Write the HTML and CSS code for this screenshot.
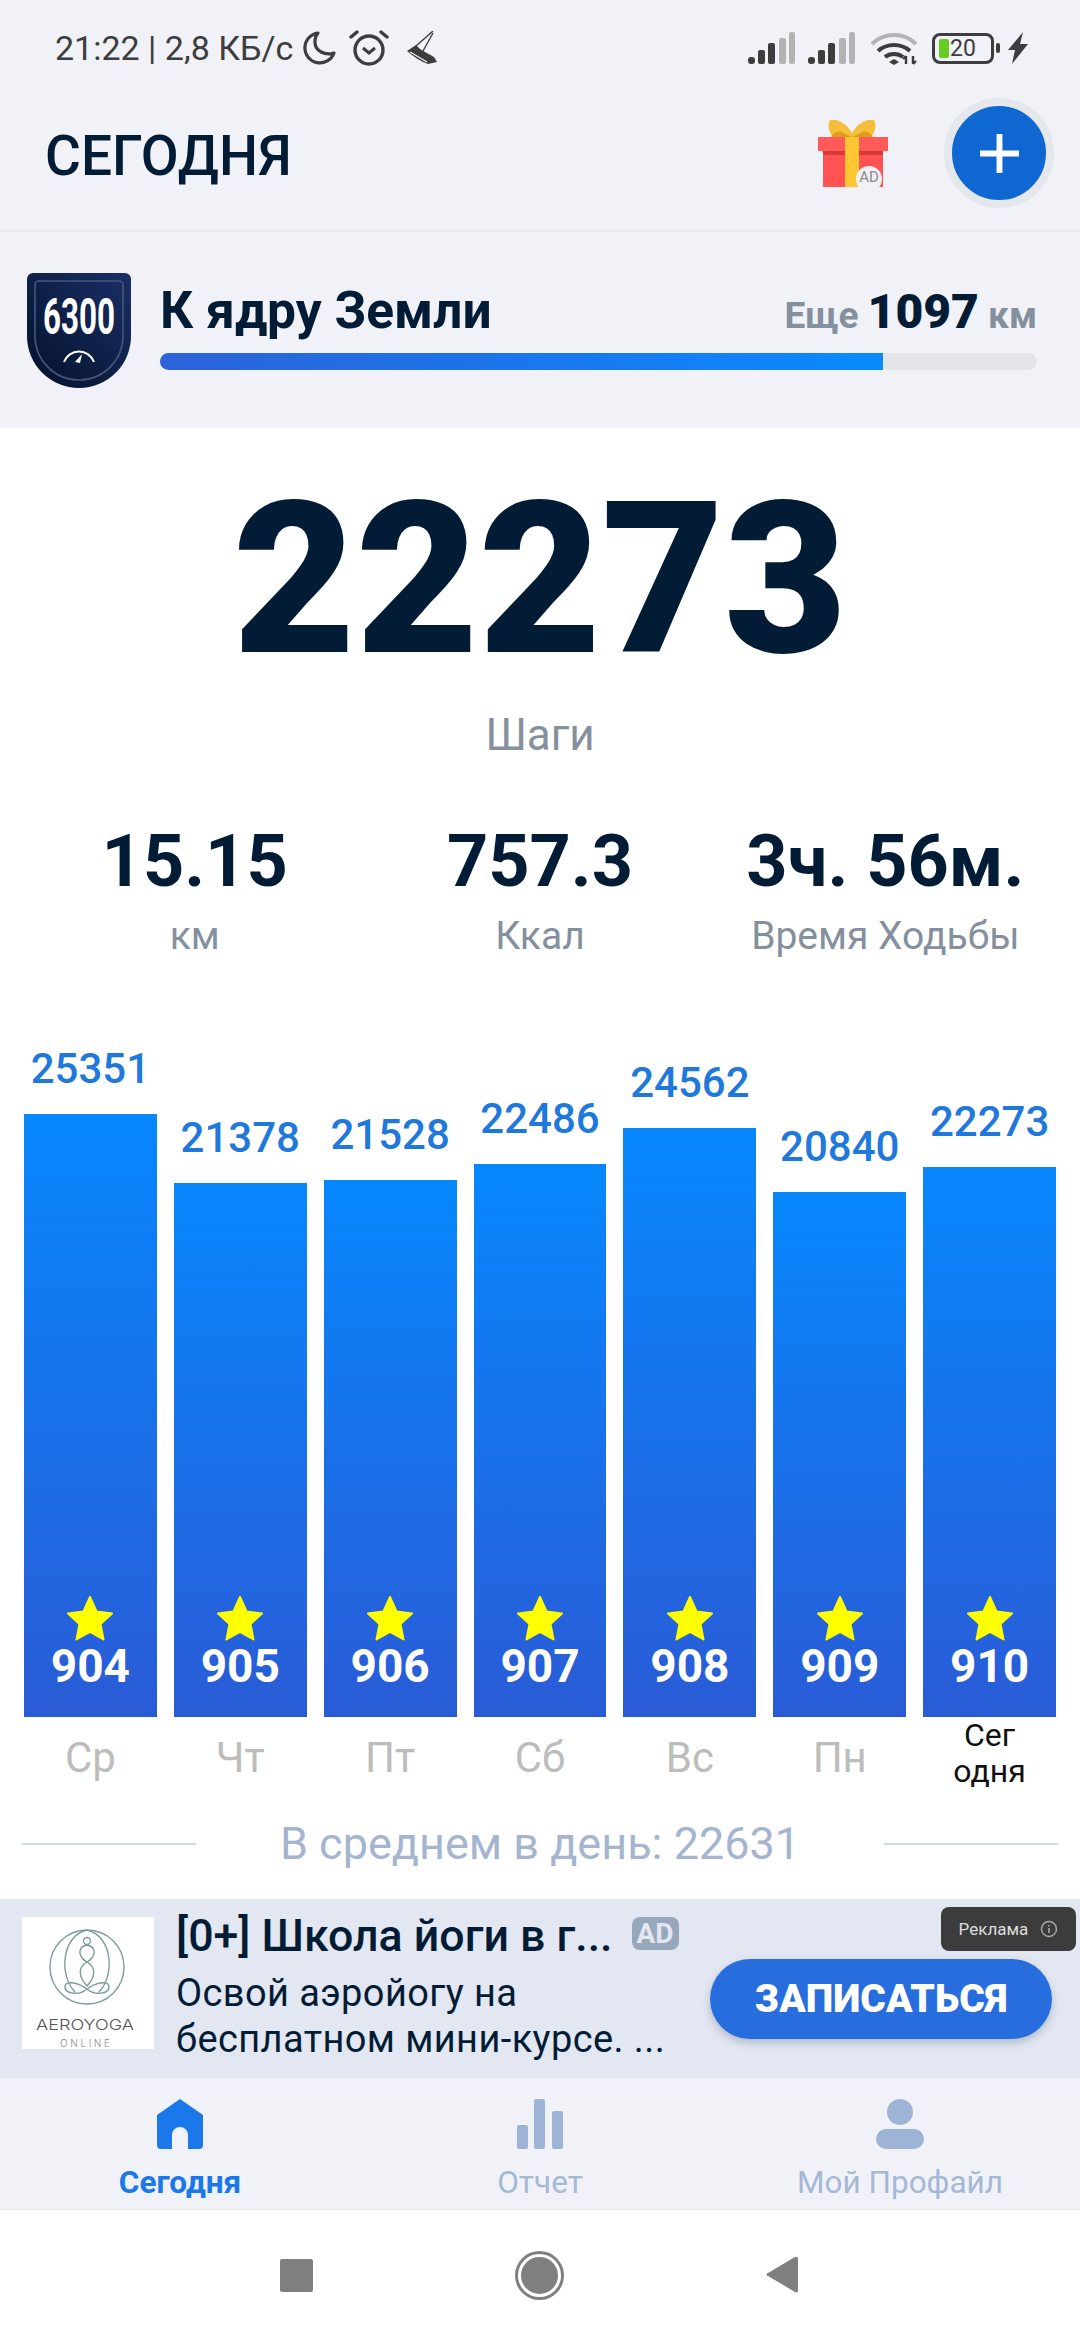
FILE: index.html
```html
<!DOCTYPE html>
<html lang="ru">

<head>
  <meta charset="UTF-8">
  <meta name="viewport" content="width=device-width, initial-scale=1.0">
  <title>Шаги</title>
  <link rel="stylesheet" href="styles.css">
</head>
<body>
  <div class="phone">

    <div class="status">
      <div class="status-left">
        <span class="status-text">21:22 | 2,8 КБ/с</span>
        <svg class="ico-moon" viewBox="0 0 36 36"><path d="M17 3a15 15 0 1 0 16 20c-9 3-19-2-19-11 0-4 1-7 3-9z" fill="none" stroke="#3d3d3d" stroke-width="3.2" stroke-linejoin="round"/></svg>
        <svg class="ico-alarm" viewBox="0 0 40 38"><circle cx="20" cy="21" r="14" fill="none" stroke="#3d3d3d" stroke-width="3.4"/><path d="M14 19l6 5 6-5" fill="none" stroke="#3d3d3d" stroke-width="3"/><path d="M2 8l6-5M38 8l-6-5" stroke="#3d3d3d" stroke-width="3.4" stroke-linecap="round"/></svg>
        <svg class="ico-shoe" viewBox="0 0 32 34"><path d="M0 20L9 14l4 4 5 3 9 5 3 5-9 2Q10 29 0 20z" fill="#3d3d3d"/><path d="M9 15L26 0M16 20L26 2" stroke="#3d3d3d" stroke-width="1.4" fill="none"/><path d="M3 21l17 10" stroke="#f0f2f7" stroke-width="1.2"/></svg>
      </div>
      <div class="status-right">
        <svg class="ico-signal" viewBox="0 0 48 32"><rect x="0" y="25" width="7" height="7" rx="3" fill="#3d3d3d"/><rect x="10" y="18" width="7" height="14" rx="2" fill="#3d3d3d"/><rect x="20" y="11" width="7" height="21" rx="2" fill="#3d3d3d"/><rect x="31" y="6" width="7" height="26" rx="2" fill="#b3b3b3"/><rect x="41" y="0" width="6" height="32" rx="2" fill="#b3b3b3"/></svg>
        <svg class="ico-signal" viewBox="0 0 48 32"><rect x="0" y="25" width="7" height="7" rx="3" fill="#3d3d3d"/><rect x="10" y="18" width="7" height="14" rx="2" fill="#3d3d3d"/><rect x="20" y="11" width="7" height="21" rx="2" fill="#3d3d3d"/><rect x="31" y="6" width="7" height="26" rx="2" fill="#b3b3b3"/><rect x="41" y="0" width="6" height="32" rx="2" fill="#b3b3b3"/></svg>
        <svg class="ico-wifi" viewBox="0 0 48 34"><path d="M2 13C14 1 34 1 46 13" fill="none" stroke="#b3b3b3" stroke-width="4"/><path d="M8 20c9-8 23-8 32 0" fill="none" stroke="#3d3d3d" stroke-width="4"/><path d="M15 26c5-4 13-4 18 0" fill="none" stroke="#3d3d3d" stroke-width="4"/><path d="M19 31l5-3 5 3-5 3z" fill="#3d3d3d"/><path d="M36 33v-8M36 25l-3 3M43 25v8M43 33l3-3" stroke="#3d3d3d" stroke-width="2.4" fill="none"/></svg>
        <div class="battery">
          <div class="battery-body"><span class="battery-fill"></span><span class="battery-num">20</span></div>
          <span class="battery-cap"></span>
        </div>
        <svg class="ico-bolt" viewBox="0 0 20 32"><path d="M15 0L0 18h7l-3 14L20 12h-8z" fill="#3d3d3d"/></svg>
      </div>
    </div>

    <div class="header">
      <h1 class="page-title">СЕГОДНЯ</h1>
      <svg class="gift" viewBox="0 0 70 68">
        <path d="M34 14C28 4 20 0 12 1c-3 6-1 12 3 17h38c4-5 6-11 3-17-8-1-16 3-22 13z" fill="#f5bf3a"/>
        <path d="M13 18c2-4 6-6 11-5l10 5zM55 18c-2-4-6-6-11-5l-10 5z" fill="#e09c1e"/>
        <rect x="0" y="18" width="70" height="14" fill="#ff5a5a"/>
        <rect x="5" y="32" width="60" height="36" fill="#ff5252"/>
        <rect x="5" y="32" width="60" height="4" fill="#d93838"/>
        <rect x="27" y="18" width="14" height="50" fill="#fdc632"/>
        <circle cx="51" cy="60" r="13" fill="#f0f2f7"/>
        <text x="51" y="63" class="gift-ad" text-anchor="middle">AD</text>
      </svg>
      <div class="add-btn"><svg viewBox="0 0 40 40" class="add-plus"><path d="M20 0v40M0 20h40" stroke="#fff" stroke-width="6"/></svg></div>
    </div>

    <div class="goal">
      <svg class="badge" viewBox="0 0 104 115">
        <defs>
          <linearGradient id="shield" x1="1" y1="0" x2="0" y2="1">
            <stop offset="0" stop-color="#1a2f66"/>
            <stop offset="1" stop-color="#04112a"/>
          </linearGradient>
        </defs>
        <path d="M6 0H98a6 6 0 0 1 6 6V63a52 52 0 0 1-104 0V6a6 6 0 0 1 6-6z" fill="url(#shield)"/>
        <path d="M12 8H92a4 4 0 0 1 4 4V63a44 44 0 0 1-88 0V12a4 4 0 0 1 4-4z" fill="none" stroke="#47557a" stroke-width="1.6"/>
        <text x="52" y="61" class="badge-num" text-anchor="middle" textLength="72" lengthAdjust="spacingAndGlyphs">6300</text>
        <path d="M37 89a16 16 0 0 1 30 0" fill="none" stroke="#fff" stroke-width="2"/>
        <path d="M48 89l7-8-2 9z" fill="#fff"/>
      </svg>
      <div class="goal-body">
        <div class="goal-row">
          <span class="goal-name">К ядру Земли</span>
          <span class="goal-left">Еще <b>1097</b> км</span>
        </div>
        <div class="progress"><div class="progress-fill" style="width: 82.4%"></div></div>
      </div>
    </div>

    <div class="main">
      <div class="steps">22273</div>
      <div class="steps-label">Шаги</div>

      <div class="stats">
        <div class="stat"><div class="stat-num">15.15</div><div class="stat-label">км</div></div>
        <div class="stat"><div class="stat-num">757.3</div><div class="stat-label">Ккал</div></div>
        <div class="stat"><div class="stat-num">3ч. 56м.</div><div class="stat-label">Время Ходьбы</div></div>
      </div>

      <div class="chart">
        <div class="col"><div class="col-val">25351</div><div class="bar" style="height: 603px"><svg class="star" viewBox="0 0 50 48"><path d="M25 3l6.500 14.500 15.500 2-11.500 10.500 3 15.500-13.500-7.500-13.500 7.500 3-15.500L3 19.500l15.500-2z"/></svg><div class="bar-num">904</div></div><div class="day">Ср</div></div>
        <div class="col"><div class="col-val">21378</div><div class="bar" style="height: 534px"><svg class="star" viewBox="0 0 50 48"><path d="M25 3l6.500 14.500 15.500 2-11.500 10.500 3 15.500-13.500-7.500-13.500 7.500 3-15.500L3 19.500l15.500-2z"/></svg><div class="bar-num">905</div></div><div class="day">Чт</div></div>
        <div class="col"><div class="col-val">21528</div><div class="bar" style="height: 537px"><svg class="star" viewBox="0 0 50 48"><path d="M25 3l6.500 14.500 15.500 2-11.500 10.500 3 15.500-13.500-7.500-13.500 7.500 3-15.500L3 19.500l15.500-2z"/></svg><div class="bar-num">906</div></div><div class="day">Пт</div></div>
        <div class="col"><div class="col-val">22486</div><div class="bar" style="height: 553px"><svg class="star" viewBox="0 0 50 48"><path d="M25 3l6.500 14.500 15.500 2-11.500 10.500 3 15.500-13.500-7.500-13.500 7.500 3-15.500L3 19.500l15.500-2z"/></svg><div class="bar-num">907</div></div><div class="day">Сб</div></div>
        <div class="col"><div class="col-val">24562</div><div class="bar" style="height: 589px"><svg class="star" viewBox="0 0 50 48"><path d="M25 3l6.500 14.500 15.500 2-11.500 10.500 3 15.500-13.500-7.500-13.500 7.500 3-15.500L3 19.500l15.500-2z"/></svg><div class="bar-num">908</div></div><div class="day">Вс</div></div>
        <div class="col"><div class="col-val">20840</div><div class="bar" style="height: 525px"><svg class="star" viewBox="0 0 50 48"><path d="M25 3l6.500 14.500 15.500 2-11.500 10.500 3 15.500-13.500-7.500-13.500 7.500 3-15.500L3 19.500l15.500-2z"/></svg><div class="bar-num">909</div></div><div class="day">Пн</div></div>
        <div class="col"><div class="col-val">22273</div><div class="bar" style="height: 550px"><svg class="star" viewBox="0 0 50 48"><path d="M25 3l6.500 14.500 15.500 2-11.500 10.500 3 15.500-13.500-7.500-13.500 7.500 3-15.500L3 19.500l15.500-2z"/></svg><div class="bar-num">910</div></div><div class="day today">Сег<br>одня</div></div>
      </div>

      <div class="average">
        <span class="avg-line"></span>
        <span class="avg-text">В среднем в день: 22631</span>
        <span class="avg-line"></span>
      </div>
    </div>

    <div class="ad">
      <svg class="ad-logo" viewBox="0 0 132 132">
        <rect width="132" height="132" fill="#fff"/>
        <g fill="none" stroke="#7f9c9c" stroke-width="1.4">
          <circle cx="65" cy="50" r="37"/>
          <path d="M65 13c-26 6-28 46-12 62M65 13c26 6 28 46 12 62"/>
          <circle cx="65" cy="24" r="3.500"/>
          <path d="M65 28c-10 2-9 12 0 17 9 5 9 14 0 24-9-10-9-19 0-24 9-5 10-15 0-17z"/>
          <path d="M65 72c-8-6-21-9-22-3-1 8 14 10 22 3 8 7 23 5 22-3-1-6-14-3-22 3z"/>
        </g>
        <text x="63" y="113" class="logo-main" text-anchor="middle" textLength="98" lengthAdjust="spacingAndGlyphs">AEROYOGA</text>
        <text x="63" y="130" class="logo-sub" text-anchor="middle" textLength="50">ONLINE</text>
      </svg>
      <div class="ad-text">
        <div class="ad-title"><span>[0+] Школа йоги в г...</span><span class="ad-mark">AD</span></div>
        <div class="ad-desc">Освой аэройогу на<br>бесплатном мини-курсе. ...</div>
      </div>
      <div class="ad-btn">ЗАПИСАТЬСЯ</div>
      <div class="ad-tag">
        <span>Реклама</span>
        <svg class="ad-info" viewBox="0 0 18 18"><circle cx="9" cy="9" r="7.500" fill="none" stroke="#aaa" stroke-width="1.4"/><path d="M9 8v5M9 5v1.600" stroke="#aaa" stroke-width="1.6"/></svg>
      </div>
    </div>

    <div class="tabs">
      <div class="tab active">
        <svg class="tab-ico" viewBox="0 0 46 50"><path d="M23 0L46 16V46a4 4 0 0 1-4 4H31V36a8 8 0 0 0-16 0V50H4a4 4 0 0 1-4-4V16z" fill="#1a78ea"/></svg>
        <span>Сегодня</span>
      </div>
      <div class="tab">
        <svg class="tab-ico" viewBox="0 0 46 50"><rect x="0" y="26" width="11" height="24" rx="2" fill="#9db4d6"/><rect x="17" y="0" width="11" height="50" rx="2" fill="#9db4d6"/><rect x="35" y="12" width="11" height="38" rx="2" fill="#9db4d6"/></svg>
        <span>Отчет</span>
      </div>
      <div class="tab">
        <svg class="tab-ico" viewBox="0 0 48 50"><circle cx="24" cy="13" r="13" fill="#9db4d6"/><rect x="0" y="30" width="48" height="20" rx="10" fill="#9db4d6"/></svg>
        <span>Мой Профайл</span>
      </div>
    </div>

    <div class="nav">
      <span class="nav-square"></span>
      <span class="nav-circle"></span>
      <svg class="nav-back" viewBox="0 0 32 38"><path d="M31 3v32a2 2 0 0 1-3 1L1 20a1.500 1.500 0 0 1 0-3L28 1a2 2 0 0 1 3 2z" fill="#7f7f7f"/></svg>
    </div>

  </div>
</body>
</html>
```

FILE: styles.css
```css
* {
  box-sizing: border-box;
}

body {
  margin: 0;
  font-family: "Roboto", "Noto Sans", sans-serif;
  background: #fff;
}

.phone {
  width: 1080px;
  height: 2340px;
  display: flex;
  flex-direction: column;
  overflow: hidden;
}

/* status bar */
.status {
  height: 96px;
  background: #f0f2f7;
  display: flex;
  justify-content: space-between;
  align-items: center;
  padding: 0 52px 0 55px;
}

.status-left,
.status-right {
  display: flex;
  align-items: center;
}

.status-text {
  font-size: 34px;
  color: #3d3d3d;
}

.ico-moon {
  width: 36px;
  height: 36px;
  margin-left: 8px;
}

.ico-alarm {
  width: 40px;
  height: 38px;
  margin-left: 12px;
}

.ico-shoe {
  width: 32px;
  height: 34px;
  margin-left: 18px;
}

.ico-signal {
  width: 48px;
  height: 32px;
  margin-right: 12px;
}

.ico-wifi {
  width: 48px;
  height: 34px;
  margin-left: 2px;
  margin-right: 14px;
}

.battery {
  display: flex;
  align-items: center;
}

.battery-body {
  width: 62px;
  height: 31px;
  border: 3px solid #3d3d3d;
  border-radius: 8px;
  display: flex;
  align-items: center;
  padding-left: 4px;
}

.battery-fill {
  width: 10px;
  height: 19px;
  background: #66cc22;
  border-radius: 2px;
}

.battery-num {
  font-size: 23px;
  color: #3d3d3d;
  margin-left: 1px;
}

.battery-cap {
  width: 4px;
  height: 10px;
  background: #3d3d3d;
  margin-left: 2px;
  border-radius: 2px;
}

.ico-bolt {
  width: 20px;
  height: 32px;
  margin-left: 8px;
}

/* header */
.header {
  height: 136px;
  background: #f0f2f7;
  border-bottom: 2px solid #e9ebf0;
  display: flex;
  align-items: center;
  padding: 0 26px 20px 45px;
}

.page-title {
  margin: 5px 0 0;
  flex: 1;
  font-size: 55px;
  font-weight: 500;
  color: #021c36;
}

.gift {
  width: 70px;
  height: 68px;
  margin-right: 56px;
  overflow: visible;
}

.gift-ad {
  font-family: "Roboto", sans-serif;
  font-size: 15px;
  fill: #8a8a8a;
}

.add-btn {
  width: 110px;
  height: 110px;
  border-radius: 50%;
  background: #0f67d2;
  border: 8px solid #e4e7ec;
  display: flex;
  align-items: center;
  justify-content: center;
}

.add-plus {
  width: 39px;
  height: 39px;
}

/* goal */
.goal {
  height: 196px;
  background: #f0f2f7;
  display: flex;
  align-items: flex-start;
  padding: 41px 43px 0 27px;
}

.badge {
  width: 104px;
  height: 115px;
  flex: none;
  overflow: visible;
}

.badge-num {
  font-family: "Roboto", sans-serif;
  font-weight: 700;
  font-size: 50px;
  fill: #fff;
}

.goal-body {
  flex: 1;
  margin-left: 29px;
}

.goal-row {
  display: flex;
  justify-content: space-between;
  align-items: baseline;
  height: 67px;
  padding-top: 7px;
}

.goal-name {
  font-size: 51.5px;
  font-weight: 700;
  color: #021c36;
}

.goal-left {
  font-size: 37px;
  font-weight: 700;
  color: #84909e;
}

.goal-left b {
  font-size: 48px;
  color: #021c36;
}

.progress {
  height: 17px;
  margin-top: 13px;
  background: #e3e5e8;
  border-radius: 9px;
  overflow: hidden;
}

.progress-fill {
  height: 100%;
  background: linear-gradient(to right, #2c62d8, #0a8aff);
}

/* steps */
.main {
  flex: 1;
  background: #fff;
}

.steps {
  margin-top: 27px;
  text-align: center;
  font-size: 212px;
  line-height: 250px;
  font-weight: 900;
  color: #021c36;
}

.steps-label {
  text-align: center;
  font-size: 44px;
  line-height: 50px;
  color: #84909e;
  margin-top: 5px;
}

.stats {
  display: flex;
  margin-top: 62px;
  padding: 0 22px;
}

.stat {
  flex: 1;
  text-align: center;
}

.stat-num {
  font-size: 72px;
  line-height: 80px;
  font-weight: 700;
  color: #021c36;
}

.stat-label {
  font-size: 39px;
  line-height: 50px;
  margin-top: 9px;
  color: #84909e;
}

/* chart */
.chart {
  display: flex;
  gap: 17px;
  align-items: flex-end;
  padding: 0 24px;
  height: 778px;
  margin-top: 68px;
}

.col {
  flex: 1;
  min-width: 0;
  display: flex;
  flex-direction: column;
  align-items: center;
}

.col-val {
  font-size: 42px;
  line-height: 50px;
  font-weight: 500;
  color: #1f78dc;
  margin-bottom: 20px;
}

.bar {
  width: 100%;
  background: linear-gradient(to bottom, #0787fd, #2a5bd6);
  display: flex;
  flex-direction: column;
  justify-content: flex-end;
  align-items: center;
  padding-bottom: 25px;
}

.star {
  width: 50px;
  height: 48px;
  fill: #ffff00;
  stroke: #ffff00;
  stroke-width: 2;
  stroke-linejoin: round;
}

.bar-num {
  font-size: 46px;
  line-height: 52px;
  font-weight: 700;
  color: #fff;
  margin-top: -2px;
}

.day {
  height: 90px;
  padding-top: 16px;
  font-size: 42px;
  line-height: 50px;
  color: #bcbcbc;
  text-align: center;
}

.today {
  padding-top: 0;
  font-size: 32px;
  line-height: 36px;
  color: #111;
}

.average {
  display: flex;
  align-items: center;
  justify-content: space-between;
  padding: 0 22px;
  margin-top: 11px;
}

.avg-line {
  width: 174px;
  height: 2px;
  background: #cfd8e6;
}

.avg-text {
  font-size: 45px;
  line-height: 52px;
  color: #a5b4cf;
}

/* ad */
.ad {
  position: relative;
  height: 179px;
  background: #e3e7f1;
  display: flex;
  padding: 18px 28px 0 22px;
}

.ad-logo {
  width: 132px;
  height: 132px;
  flex: none;
}

.logo-main {
  font-family: "Inter", sans-serif;
  font-weight: 300;
  font-size: 15px;
  fill: #555;
}

.logo-sub {
  font-family: "Inter", sans-serif;
  font-weight: 300;
  font-size: 10px;
  fill: #888;
}

.ad-text {
  margin: -6px 0 0 22px;
  flex: 1;
  color: #021c36;
}

.ad-title {
  display: flex;
  align-items: flex-start;
  font-size: 44.7px;
  line-height: 50px;
  font-weight: 500;
}

.ad-mark {
  font-size: 28px;
  line-height: 33px;
  font-weight: 700;
  color: #e3e7f1;
  background: #97a8bd;
  border-radius: 8px;
  padding: 0 5px;
  margin: 6px 0 0 19px;
}

.ad-desc {
  font-size: 38px;
  line-height: 46px;
  margin-top: 9px;
  letter-spacing: 0.4px;
  white-space: nowrap;
}

.ad-btn {
  position: absolute;
  left: 710px;
  top: 60px;
  width: 342px;
  height: 80px;
  border-radius: 40px;
  background: #286ddd;
  box-shadow: 0 4px 8px rgba(60, 80, 120, 0.3);
  color: #fff;
  font-size: 39px;
  font-weight: 900;
  display: flex;
  align-items: center;
  justify-content: center;
}

.ad-tag {
  position: absolute;
  left: 941px;
  top: 8px;
  width: 135px;
  height: 44px;
  border-radius: 8px;
  background: #3c3c3c;
  color: #ddd;
  font-size: 17px;
  display: flex;
  align-items: center;
  justify-content: center;
  gap: 12px;
}

.ad-info {
  width: 18px;
  height: 18px;
}

/* bottom tabs */
.tabs {
  height: 132px;
  background: #f0f2f7;
  border-bottom: 1px solid #e6e8ec;
  display: flex;
  padding-top: 21px;
}

.tab {
  flex: 1;
  display: flex;
  flex-direction: column;
  align-items: center;
  font-size: 31.5px;
  color: #a5b8d6;
}

.tab.active {
  color: #1a78ea;
  font-weight: 700;
}

.tab-ico {
  height: 50px;
  margin-bottom: 15px;
}

/* system nav */
.nav {
  height: 130px;
  background: #fff;
  display: grid;
  grid-template-columns: 1fr 1fr 1fr;
  justify-items: center;
  align-items: center;
  padding: 0 50px;
}

.nav-square {
  width: 33px;
  height: 33px;
  background: #7f7f7f;
  border-radius: 2px;
  justify-self: end;
  margin-right: 64px;
}

.nav-circle {
  width: 43px;
  height: 43px;
  border-radius: 50%;
  background: #7f7f7f;
  border: 3px solid #fff;
  box-shadow: 0 0 0 3px #7f7f7f;
}

.nav-back {
  width: 32px;
  height: 38px;
  justify-self: start;
  margin-left: 64px;
}
```
